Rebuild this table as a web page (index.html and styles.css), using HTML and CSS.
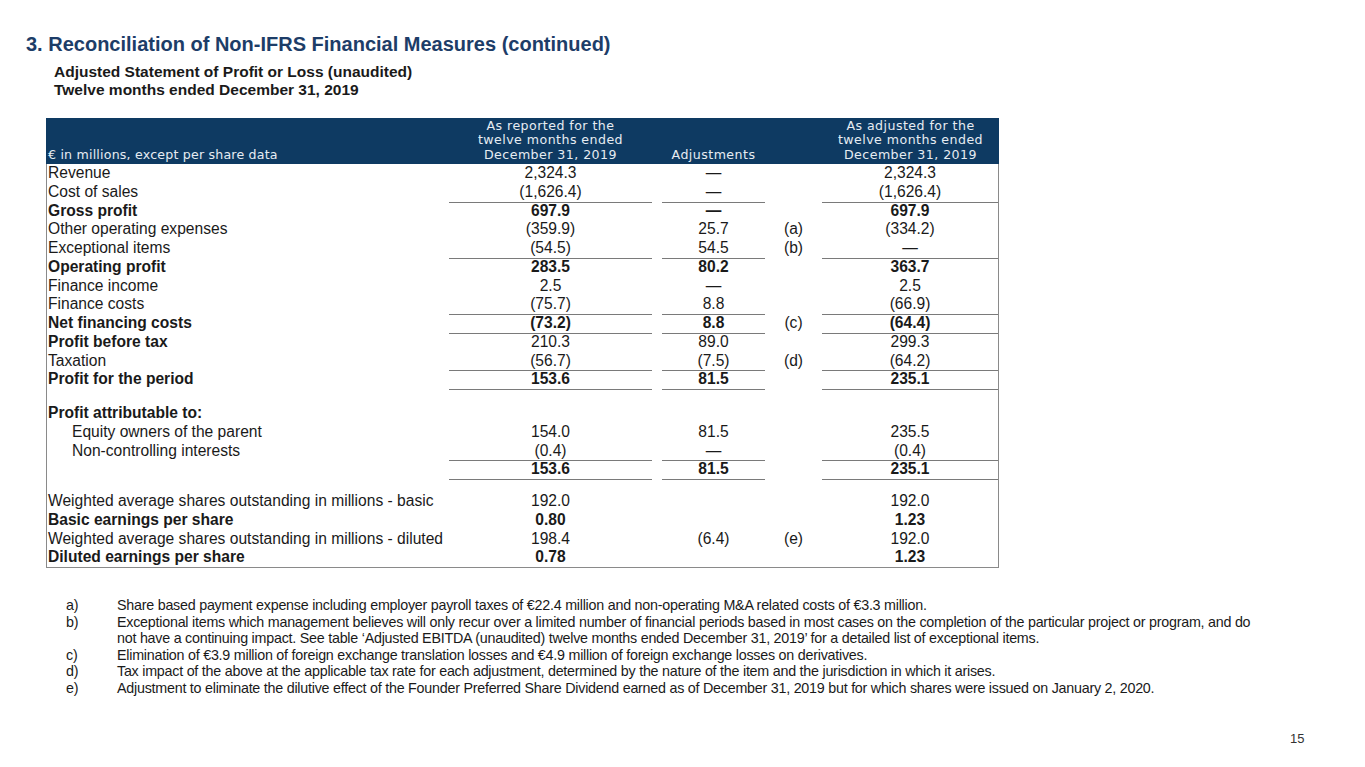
FILE: index.html
```html
<!DOCTYPE html>
<html lang="en">
<head>
<meta charset="utf-8">
<title>Reconciliation of Non-IFRS Financial Measures</title>
<link rel="stylesheet" href="styles.css">
</head>
<body>
<div class="page">
  <h1 class="title">3. Reconciliation of Non-IFRS Financial Measures (continued)</h1>
  <div class="subtitle">
    <div>Adjusted Statement of Profit or Loss (unaudited)</div>
    <div>Twelve months ended December 31, 2019</div>
  </div>

  <div class="table">
    <div class="row head">
      <div class="label">€ in millions, except per share data</div>
      <div class="c1">As reported for the<br>twelve months ended<br>December 31, 2019</div>
      <div class="c2">Adjustments</div>
      <div class="note"></div>
      <div class="c3">As adjusted for the<br>twelve months ended<br>December 31, 2019</div>
    </div>
    <div class="body">
      <div class="row"><div class="label">Revenue</div><div class="c1">2,324.3</div><div class="c2">—</div><div class="note"></div><div class="c3">2,324.3</div></div>
      <div class="row rule"><div class="label">Cost of sales</div><div class="c1">(1,626.4)</div><div class="c2">—</div><div class="note"></div><div class="c3">(1,626.4)</div></div>
      <div class="row bold"><div class="label">Gross profit</div><div class="c1">697.9</div><div class="c2">—</div><div class="note"></div><div class="c3">697.9</div></div>
      <div class="row"><div class="label">Other operating expenses</div><div class="c1">(359.9)</div><div class="c2">25.7</div><div class="note">(a)</div><div class="c3">(334.2)</div></div>
      <div class="row rule"><div class="label">Exceptional items</div><div class="c1">(54.5)</div><div class="c2">54.5</div><div class="note">(b)</div><div class="c3">—</div></div>
      <div class="row bold"><div class="label">Operating profit</div><div class="c1">283.5</div><div class="c2">80.2</div><div class="note"></div><div class="c3">363.7</div></div>
      <div class="row"><div class="label">Finance income</div><div class="c1">2.5</div><div class="c2">—</div><div class="note"></div><div class="c3">2.5</div></div>
      <div class="row rule"><div class="label">Finance costs</div><div class="c1">(75.7)</div><div class="c2">8.8</div><div class="note"></div><div class="c3">(66.9)</div></div>
      <div class="row bold rule"><div class="label">Net financing costs</div><div class="c1">(73.2)</div><div class="c2">8.8</div><div class="note">(c)</div><div class="c3">(64.4)</div></div>
      <div class="row"><div class="label bold">Profit before tax</div><div class="c1">210.3</div><div class="c2">89.0</div><div class="note"></div><div class="c3">299.3</div></div>
      <div class="row rule"><div class="label">Taxation</div><div class="c1">(56.7)</div><div class="c2">(7.5)</div><div class="note">(d)</div><div class="c3">(64.2)</div></div>
      <div class="row bold rule"><div class="label">Profit for the period</div><div class="c1">153.6</div><div class="c2">81.5</div><div class="note"></div><div class="c3">235.1</div></div>
      <div class="spacer s1"></div>
      <div class="row bold"><div class="label">Profit attributable to:</div><div class="c1"></div><div class="c2"></div><div class="note"></div><div class="c3"></div></div>
      <div class="row"><div class="label indent">Equity owners of the parent</div><div class="c1">154.0</div><div class="c2">81.5</div><div class="note"></div><div class="c3">235.5</div></div>
      <div class="row rule"><div class="label indent">Non-controlling interests</div><div class="c1">(0.4)</div><div class="c2">—</div><div class="note"></div><div class="c3">(0.4)</div></div>
      <div class="row bold rule"><div class="label"></div><div class="c1">153.6</div><div class="c2">81.5</div><div class="note"></div><div class="c3">235.1</div></div>
      <div class="spacer s2"></div>
      <div class="row"><div class="label">Weighted average shares outstanding in millions - basic</div><div class="c1">192.0</div><div class="c2"></div><div class="note"></div><div class="c3">192.0</div></div>
      <div class="row bold"><div class="label">Basic earnings per share</div><div class="c1">0.80</div><div class="c2"></div><div class="note"></div><div class="c3">1.23</div></div>
      <div class="row"><div class="label">Weighted average shares outstanding in millions - diluted</div><div class="c1">198.4</div><div class="c2">(6.4)</div><div class="note">(e)</div><div class="c3">192.0</div></div>
      <div class="row bold"><div class="label">Diluted earnings per share</div><div class="c1">0.78</div><div class="c2"></div><div class="note"></div><div class="c3">1.23</div></div>
    </div>
  </div>

  <div class="notes">
    <div class="fn"><span class="fl">a)</span><span class="ft">Share based payment expense including employer payroll taxes of €22.4 million and non-operating M&amp;A related costs of €3.3 million.</span></div>
    <div class="fn"><span class="fl">b)</span><span class="ft">Exceptional items which management believes will only recur over a limited number of financial periods based in most cases on the completion of the particular project or program, and do not have a continuing impact. See table ‘Adjusted EBITDA (unaudited) twelve months ended December 31, 2019’ for a detailed list of exceptional items.</span></div>
    <div class="fn"><span class="fl">c)</span><span class="ft">Elimination of €3.9 million of foreign exchange translation losses and €4.9 million of foreign exchange losses on derivatives.</span></div>
    <div class="fn"><span class="fl">d)</span><span class="ft">Tax impact of the above at the applicable tax rate for each adjustment, determined by the nature of the item and the jurisdiction in which it arises.</span></div>
    <div class="fn"><span class="fl">e)</span><span class="ft">Adjustment to eliminate the dilutive effect of the Founder Preferred Share Dividend earned as of December 31, 2019 but for which shares were issued on January 2, 2020.</span></div>
  </div>

  <div class="pagenum">15</div>
</div>
</body>
</html>
```
FILE: styles.css
```css
* { box-sizing: border-box; }
html, body { margin: 0; padding: 0; background: #fff; }
body {
  font-family: "Liberation Sans", Arial, sans-serif;
  color: #1a1a1a;
  width: 1365px;
  height: 767px;
  overflow: hidden;
}
.page {
  position: relative;
  width: 1365px;
  height: 767px;
  padding: 32px 0 0 26px;
}
.title {
  margin: 0;
  font-size: 20px;
  line-height: 24px;
  font-weight: bold;
  color: #1d3d68;
}
.subtitle {
  margin: 7px 0 0 28px;
  font-size: 15.5px;
  font-weight: bold;
  line-height: 17.5px;
  color: #1a1a1a;
}
.table {
  margin: 20px 0 0 20px;
  width: 953px;
}
.row {
  display: grid;
  grid-template-columns: 403px 203px 113px 57px 177px;
  height: 18.75px;
  line-height: 18.75px;
  font-size: 15.6px;
}
.row > div { white-space: nowrap; }
.row .label { padding-left: 1px; }
.row .c1, .row .c2, .row .c3 { text-align: center; }
.row .c2 { margin-left: 10px; }
.row .note { text-align: center; font-weight: normal; }
.row.rule .c1, .row.rule .c2, .row.rule .c3 { border-bottom: 1px solid #7a7a7a; }
.bold { font-weight: bold; }
.indent { padding-left: 25px !important; }

.row.head {
  height: 46px;
  background: #0e3a62;
  color: #e6ecf2;
  font-family: "DejaVu Sans", "Liberation Sans", sans-serif;
  font-size: 12.6px;
  letter-spacing: 0.45px;
  line-height: 14.8px;
  align-items: end;
  padding-bottom: 1px;
}
.row.head .label { padding-left: 2px; letter-spacing: 0.2px; }

.body {
  border-left: 1px solid #8a8a8a;
  border-right: 1px solid #8a8a8a;
  border-bottom: 1px solid #8a8a8a;
}
.body .row { grid-template-columns: 402px 203px 113px 57px 176px; }
.spacer.s1 { height: 15px; }
.spacer.s2 { height: 13px; }

.notes {
  margin: 29px 0 0 40px;
  font-size: 14.3px;
  letter-spacing: -0.24px;
  line-height: 16.6px;
  width: 1199px;
}
.fn { display: grid; grid-template-columns: 51px 1fr; }

.pagenum {
  position: absolute;
  left: 1290px;
  top: 731px;
  font-size: 13px;
  color: #333;
}
```
